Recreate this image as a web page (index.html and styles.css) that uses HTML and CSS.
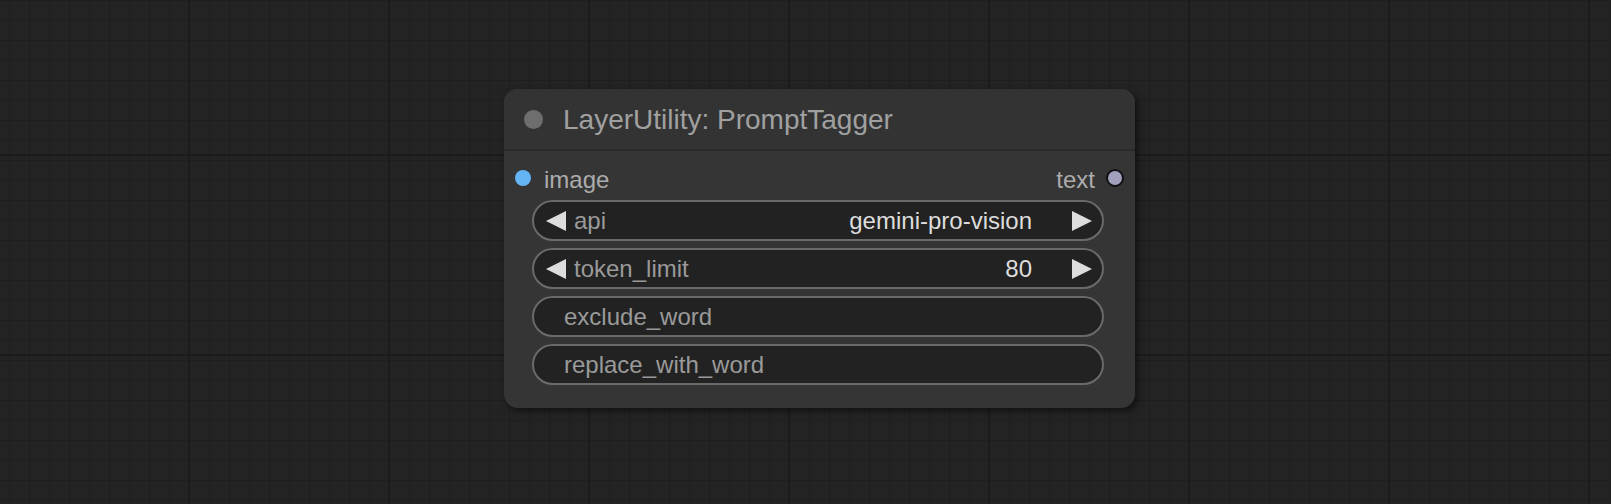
FILE: index.html
```html
<!DOCTYPE html>
<html>
<head>
<meta charset="utf-8">
<link rel="stylesheet" href="styles.css">
</head>
<body>
<div class="canvas">
  <div class="node">
    <div class="title">
      <span class="title-dot"></span>
      <span class="title-text">LayerUtility: PromptTagger</span>
    </div>
    <div class="node-body">
      <div class="slots">
        <div class="slot slot-in"><span class="dot dot-image"></span><span>image</span></div>
        <div class="slot slot-out"><span>text</span><span class="dot dot-text"></span></div>
      </div>
      <div class="widgets">
        <div class="widget combo">
          <svg class="arrow" viewBox="0 0 20 20"><polygon points="0,10 20,0 20,20"/></svg>
          <span class="label">api</span>
          <span class="value">gemini-pro-vision</span>
          <svg class="arrow" viewBox="0 0 20 20"><polygon points="20,10 0,0 0,20"/></svg>
        </div>
        <div class="widget combo">
          <svg class="arrow" viewBox="0 0 20 20"><polygon points="0,10 20,0 20,20"/></svg>
          <span class="label">token_limit</span>
          <span class="value">80</span>
          <svg class="arrow" viewBox="0 0 20 20"><polygon points="20,10 0,0 0,20"/></svg>
        </div>
        <div class="widget text">
          <span class="label">exclude_word</span>
        </div>
        <div class="widget text">
          <span class="label">replace_with_word</span>
        </div>
      </div>
    </div>
  </div>
</div>
</body>
</html>
```
FILE: styles.css
```css
html, body {
  margin: 0;
  padding: 0;
  background: #222222;
}
.canvas {
  position: relative;
  width: 1611px;
  height: 504px;
  overflow: hidden;
  font-family: "Liberation Sans", Arial, sans-serif;
  background-color: #232323;
  background-image:
    linear-gradient(to right, #1b1b1b 0 2px, transparent 2px),
    linear-gradient(to bottom, #1b1b1b 0 2px, transparent 2px),
    linear-gradient(to right, #1e1e1e 0 1px, transparent 1px),
    linear-gradient(to bottom, #1e1e1e 0 1px, transparent 1px);
  background-size: 200px 200px, 200px 200px, 20px 20px, 20px 20px;
  background-position: 188px 0, 0 154px, 9px 0, 0 0;
}
.node {
  position: absolute;
  left: 504px;
  top: 89px;
  width: 631px;
  height: 319px;
  background: #353535;
  border-radius: 14px;
  box-shadow: 3px 3px 6px rgba(0, 0, 0, 0.5);
  display: flex;
  flex-direction: column;
}
.title {
  display: flex;
  align-items: center;
  padding-left: 20px;
  gap: 20px;
  background: #333333;
  border-radius: 14px 14px 0 0;
  border-bottom: 2px solid #2b2b2b;
  box-sizing: border-box;
  height: 62px;
}
.title-dot {
  width: 19px;
  height: 19px;
  border-radius: 50%;
  background: #6e6e6e;
}
.title-text {
  font-size: 28px;
  color: #a0a0a0;
  position: relative;
  top: 1px;
}
.node-body {
  display: flex;
  flex-direction: column;
}
.slots {
  height: 34px;
  margin-top: 10px;
  display: flex;
  justify-content: space-between;
  align-items: center;
  padding: 0 11px;
  font-size: 24px;
  color: #acacac;
}
.slot {
  display: flex;
  align-items: center;
}
.slot-in { gap: 13px; }
.slot-out { gap: 11px; }
.slot span:not(.dot) {
  position: relative;
  top: 2px;
}
.dot {
  border-radius: 50%;
  display: block;
}
.dot-image {
  width: 16px;
  height: 16px;
  background: #64b5f6;
}
.dot-text {
  width: 14px;
  height: 14px;
  background: #a1a1bd;
  border: 2px solid #111;
}
.widgets {
  margin-top: 5px;
  padding: 0 31px 0 28px;
  display: flex;
  flex-direction: column;
  gap: 7px;
}
.widget {
  height: 41px;
  box-sizing: border-box;
  border: 2px solid #6a6a6a;
  border-radius: 21px;
  background: #222222;
  display: flex;
  align-items: center;
  font-size: 24px;
}
.arrow {
  width: 20px;
  height: 20px;
  fill: #dddddd;
  flex: none;
}
.combo .arrow:first-child { margin-left: 12px; }
.combo .arrow:last-child { margin-right: 10px; margin-left: 40px; }
.combo .label {
  margin-left: 8px;
  flex: 1;
  color: #9a9a9a;
}
.value {
  color: #dddddd;
}
.text .label {
  padding-left: 30px;
  color: #9a9a9a;
}
```
